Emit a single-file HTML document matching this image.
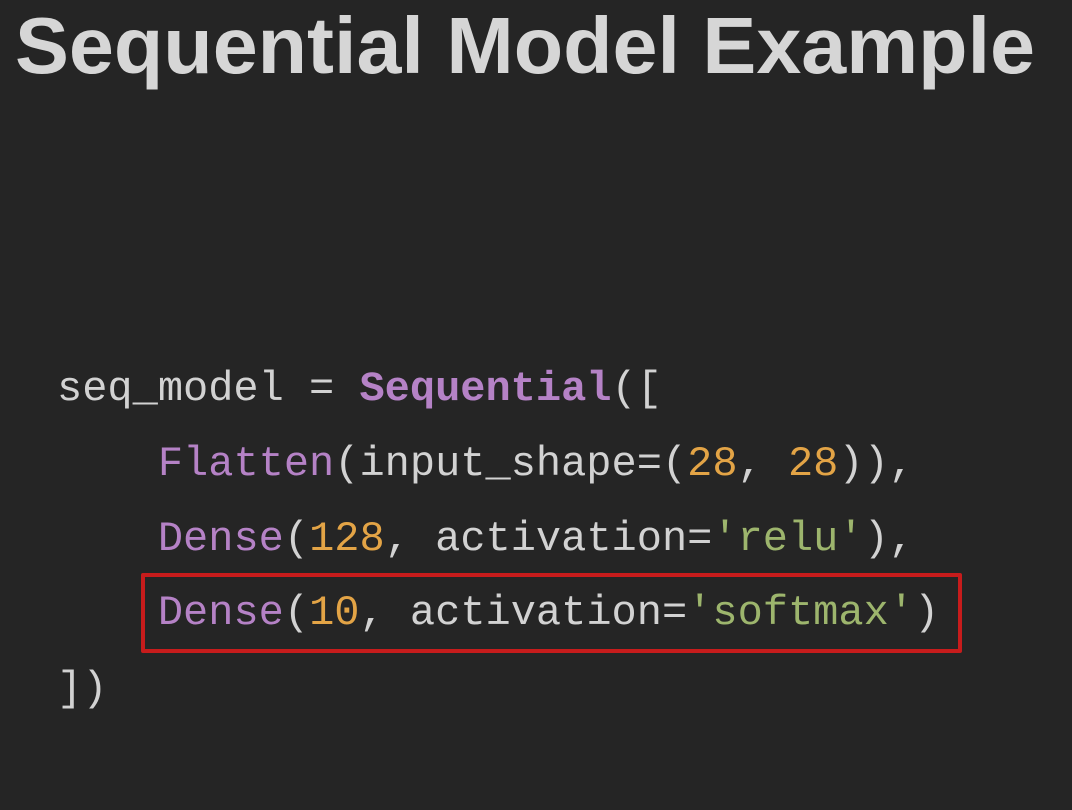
<!DOCTYPE html>
<html><head><meta charset="utf-8"><style>
html,body{margin:0;padding:0;background:#252525;width:1072px;height:810px;overflow:hidden}
.code{position:absolute;left:57px;font:42px "Liberation Mono",monospace;color:#d2d2d2;white-space:pre}
.p{color:#b582c6}.o{color:#e3a446}.g{color:#9db56d}.b{font-weight:bold}
.box{position:absolute;left:141px;top:573px;width:813px;height:72px;border:4px solid #c71c1c;border-radius:2px}
</style></head><body>
<svg width="1072" height="120" style="position:absolute;left:0;top:0">
<text x="15" y="73" textLength="1020" lengthAdjust="spacingAndGlyphs" font-family="Liberation Sans, sans-serif" font-weight="bold" font-size="80" fill="#d6d6d6">Sequential Model Example</text>
</svg>
<div class="box"></div>
<div class="code" style="top:365px">seq_model = <span class="p b">Sequential</span>([</div>
<div class="code" style="top:440px">    <span class="p">Flatten</span>(input_shape=(<span class="o">28</span>, <span class="o">28</span>)),</div>
<div class="code" style="top:515px">    <span class="p">Dense</span>(<span class="o">128</span>, activation=<span class="g">'relu'</span>),</div>
<div class="code" style="top:589px">    <span class="p">Dense</span>(<span class="o">10</span>, activation=<span class="g">'softmax'</span>)</div>
<div class="code" style="top:665px">])</div>
</body></html>
